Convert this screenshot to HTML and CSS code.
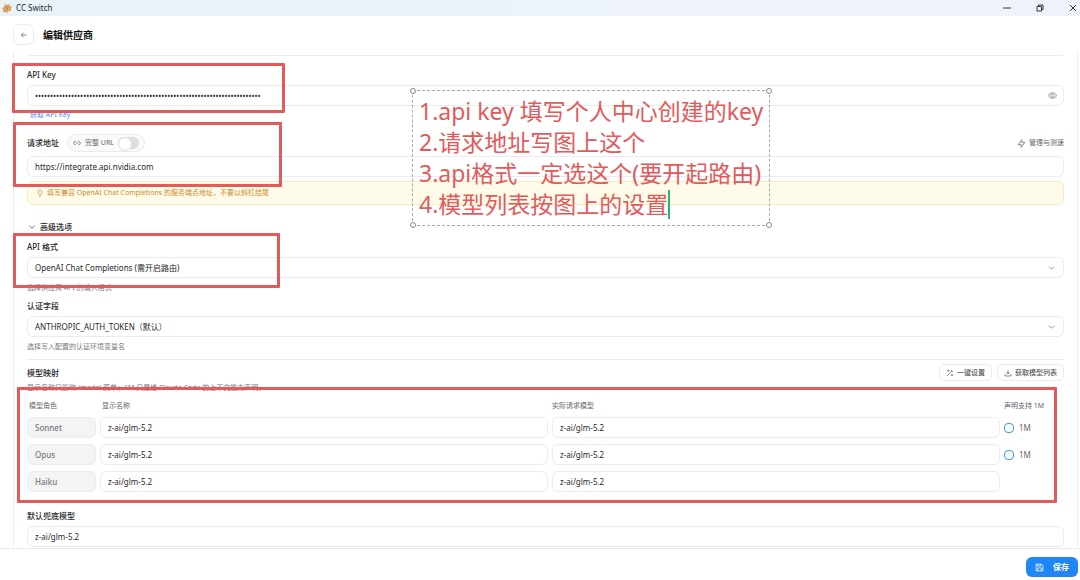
FILE: index.html
```html
<!DOCTYPE html>
<html lang="zh-CN">
<head>
  <meta charset="UTF-8" />
  <title>CC Switch</title>
  <link rel="stylesheet" href="styles.css">
</head>
<body>
  <div class="titlebar">
    <svg class="app-logo" viewBox="0 0 10 10">
      <path d="M3 1l2 1 2-1 1 2 2 1-1 2 0 2-2 0-2 2-2-1-2 0 0-2-1-2 2-1z" fill="#e2a566"/>
      <path d="M3 4h4M5 3v4M3 7l3-1" stroke="#c98a50" stroke-width="1" fill="none"/>
    </svg>
    <span>CC Switch</span>
    <div class="window-buttons">
      <button aria-label="Minimize"><svg viewBox="0 0 8 8"><path d="M0 4h8"/></svg></button>
      <button aria-label="Restore"><svg viewBox="0 0 8 8"><path d="M1 2.5h4.5V7H1zM2.5 2.500V1H7v4.500H5.500"/></svg></button>
      <button aria-label="Close"><svg viewBox="0 0 8 8"><path d="M1 1l6 6M7 1L1 7"/></svg></button>
    </div>
  </div>

  <header>
    <button class="back" aria-label="返回"><svg viewBox="0 0 24 24"><path d="M20 12H4M11 5l-7 7 7 7"/></svg></button>
    <h1>编辑供应商</h1>
  </header>

  <main>
    <form class="card" id="provider">
      <div class="field-end"></div>

      <label class="key-label" for="key">API Key</label>
      <div class="control">
        <input type="password" id="key" value="nvapi-000000000000000000000000000000000000000000000000000000000000000000000">
        <button type="button" class="eye" aria-label="显示"><svg viewBox="0 0 24 24"><path d="M2 12c1-5 4-7 10-7s9 2 10 7c-1 5-4 7-10 7s-9-2-10-7z"/><circle cx="12" cy="12" r="4"/></svg></button>
      </div>
      <a class="key-link" href="#">获取 API Key</a>

      <div class="url-row">
        <label for="url">请求地址</label>
        <label class="pill">
          <svg viewBox="0 0 24 24"><path d="M9 17H7A5 5 0 0 1 7 7h2M15 7h2a5 5 0 0 1 0 10h-2M8 12h8"/></svg>
          完整 URL
          <input type="checkbox" class="switch">
        </label>
        <button type="button" class="manage">
          <svg viewBox="0 0 24 24"><path d="M13 2v7h8L11 22v-7H3z"/></svg>
          管理与测速
        </button>
      </div>
      <input type="text" id="url" value="https://integrate.api.nvidia.com">
      <p class="notice">
        <svg viewBox="0 0 24 24"><path d="M9 17c0-4-3-4-3-8a6 6 0 0 1 12 0c0 4-3 4-3 8zM9 22h6"/></svg>
        填写兼容 OpenAI Chat Completions 的服务端点地址，不要以斜杠结尾
      </p>

      <button type="button" class="advanced">
        <svg viewBox="0 0 24 24"><path d="M4 8l8 8 8-8"/></svg>
        高级选项
      </button>

      <label for="format">API 格式</label>
      <select id="format"><option>OpenAI Chat Completions (需开启路由)</option></select>
      <p class="help">选择供应商 API 的输入格式</p>

      <label for="auth">认证字段</label>
      <select id="auth"><option>ANTHROPIC_AUTH_TOKEN（默认）</option></select>
      <p class="help">选择写入配置的认证环境变量名</p>

      <div class="mapping-head">
        <h2>模型映射</h2>
        <button type="button">
          <svg viewBox="0 0 24 24"><path d="M3 21L18 6M15 3l6 6M4 5h6M7 2v6M15 18h6M18 15v6"/></svg>
          一键设置
        </button>
        <button type="button">
          <svg viewBox="0 0 24 24"><path d="M12 3v12M7 10l5 5 5-5M3 15v6h18v-6"/></svg>
          获取模型列表
        </button>
      </div>
      <p class="help">显示名称只影响 /model 菜单；1M 只是给 Claude Code 的上下文能力声明。</p>

      <table>
        <thead>
          <tr>
            <th class="role">模型角色</th>
            <th>显示名称</th>
            <th class="request">实际请求模型</th>
            <th class="support">声明支持 1M</th>
          </tr>
        </thead>
        <tbody>
          <tr>
            <td><div class="role-name">Sonnet</div></td>
            <td><input type="text" aria-label="Sonnet 显示名称" value="z-ai/glm-5.2"></td>
            <td><input type="text" aria-label="Sonnet 实际请求模型" value="z-ai/glm-5.2"></td>
            <td><label class="million"><input type="checkbox"> 1M</label></td>
          </tr>
          <tr>
            <td><div class="role-name">Opus</div></td>
            <td><input type="text" aria-label="Opus 显示名称" value="z-ai/glm-5.2"></td>
            <td><input type="text" aria-label="Opus 实际请求模型" value="z-ai/glm-5.2"></td>
            <td><label class="million"><input type="checkbox"> 1M</label></td>
          </tr>
          <tr>
            <td><div class="role-name">Haiku</div></td>
            <td><input type="text" aria-label="Haiku 显示名称" value="z-ai/glm-5.2"></td>
            <td><input type="text" aria-label="Haiku 实际请求模型" value="z-ai/glm-5.2"></td>
            <td></td>
          </tr>
        </tbody>
      </table>

      <label for="fallback">默认兜底模型</label>
      <input type="text" id="fallback" value="z-ai/glm-5.2">
    </form>
  </main>

  <footer>
    <button class="save" form="provider">
      <svg viewBox="0 0 24 24"><path d="M3 3h14l4 4v14H3zM7 3v5h8V3M7 21v-8h10v8"/></svg>
      保存
    </button>
  </footer>

  <!-- markup drawn over the window -->
  <div class="mark mark-key"></div>
  <div class="mark mark-url"></div>
  <div class="mark mark-format"></div>
  <div class="mark mark-models"></div>
  <div class="textbox">
    <i class="handle tl"></i><i class="handle tr"></i><i class="handle bl"></i><i class="handle br"></i>
    <p>1.api key 填写个人中心创建的key</p>
    <p>2.请求地址写图上这个</p>
    <p>3.api格式一定选这个(要开起路由)</p>
    <p class="typing">4.模型列表按图上的设置</p>
  </div>
</body>
</html>
```

FILE: styles.css
```css
* {
  box-sizing: border-box;
}
body {
  margin: 0;
  height: 100vh;
  display: flex;
  flex-direction: column;
  position: relative;
  overflow: hidden;
  background: #fff;
  color: #27272a;
  font-family: "Noto Sans", "Noto Sans CJK SC", sans-serif;
  font-size: 8px;
  line-height: 12px;
}
button, input, select {
  font: inherit;
  color: inherit;
}
button {
  display: flex;
  align-items: center;
  padding: 0;
  border: none;
  background: none;
}
p, h1, h2 {
  margin: 0;
}
svg {
  width: 8px;
  height: 8px;
  flex: none;
  fill: none;
  stroke: currentColor;
  stroke-width: 2;
}

.titlebar {
  display: flex;
  align-items: center;
  gap: 4px;
  height: 16px;
  padding: 0 3px 0 2px;
  background: linear-gradient(90deg, #e9f3f7, #eff3fa);
}
.titlebar .app-logo {
  width: 10px;
  height: 10px;
  stroke: none;
}
.window-buttons {
  display: flex;
  gap: 25px;
  margin-left: auto;
  color: #333;
}
.window-buttons svg {
  stroke-width: 1;
}

header {
  display: flex;
  align-items: center;
  gap: 9px;
  height: 37px;
  padding-left: 13px;
}
.back {
  width: 21px;
  height: 21px;
  justify-content: center;
  border: 1px solid #ececee;
  border-radius: 6px;
  color: #555;
}
h1 {
  font-size: 10px;
  line-height: 16px;
  font-weight: 700;
  color: #111;
}

main {
  flex: 1;
  min-height: 0;
  overflow: hidden;
  padding: 0 2px 0 13px;
}
.card {
  display: flex;
  flex-direction: column;
  padding: 0 13px;
  border: 1px solid #ececee;
  border-width: 0 1px;
}
.field-end {
  height: 3px;
  margin-bottom: 13px;
  border-bottom: 1px solid #ececee;
  border-radius: 0 0 6px 6px;
}
label, h2 {
  font-size: 8px;
  font-weight: 500;
}
input[type=text], input[type=password], select {
  display: block;
  width: 100%;
  height: 21px;
  padding: 0 7px;
  border: 1px solid #ececee;
  border-radius: 6px;
  background: #fff;
}
.card > label {
  margin-bottom: 4px;
}
.control {
  position: relative;
}
.eye {
  position: absolute;
  right: 7px;
  top: 6px;
  color: #777;
}
.eye svg, .manage svg {
  width: 9px;
  height: 9px;
}
.key-link {
  margin: 3px 0 0 3px;
  font-size: 7px;
  color: #5b8def;
  text-decoration: none;
}
.url-row {
  display: flex;
  align-items: center;
  gap: 8px;
  height: 18px;
  margin: 13px 0 4px;
}
.pill {
  display: flex;
  align-items: center;
  gap: 4px;
  height: 18px;
  padding: 0 5px;
  border: 1px solid #ececee;
  border-radius: 9px;
  background: #fafafa;
  color: #666;
  font-size: 7px;
  font-weight: 400;
}
.switch {
  appearance: none;
  display: flex;
  width: 21px;
  height: 12px;
  margin: 0;
  border-radius: 6px;
  background: #dedee0;
}
.switch::before {
  content: "";
  width: 12px;
  height: 12px;
  border: 1px solid #dedee0;
  border-radius: 50%;
  background: #fff;
}
.manage {
  gap: 3px;
  margin-left: auto;
  font-size: 7px;
  color: #666;
}
.notice {
  display: flex;
  align-items: center;
  gap: 3px;
  height: 24px;
  margin-top: 4px;
  padding: 0 8px;
  border: 1px solid #f8edc0;
  border-radius: 6px;
  background: #fffbe9;
  font-size: 7px;
  color: #d08a2e;
}
.advanced {
  gap: 4px;
  margin: 16px 0 8px 1px;
  font-weight: 500;
}
.help {
  margin: 4px 0 6px;
  font-size: 7px;
  color: #77777c;
}

.mapping-head {
  display: flex;
  align-items: center;
  gap: 5px;
  padding-top: 4px;
  border-top: 1px solid #ececee;
}
.mapping-head h2 {
  margin-right: auto;
}
.mapping-head button {
  gap: 3px;
  height: 17px;
  padding: 0 6px;
  border: 1px solid #ececee;
  border-radius: 5px;
  font-size: 7px;
  font-weight: 500;
  color: #555;
}
.mapping-head + .help {
  margin: 1px 0 6px;
}
table {
  width: 100%;
  table-layout: fixed;
  border-collapse: collapse;
  margin-bottom: 12px;
}
th {
  padding: 0 2px 5px;
  text-align: left;
  font-size: 7px;
  font-weight: 400;
  color: #66666b;
  white-space: nowrap;
}
.role {
  width: 73px;
}
.request {
  padding-left: 0;
}
.support {
  width: 60px;
  padding-left: 0;
}
td {
  height: 27px;
  padding: 0 4px 6px 0;
  vertical-align: top;
}
td:last-child {
  padding-right: 0;
}
.role-name {
  height: 21px;
  padding: 4px 7px;
  border: 1px solid #ececee;
  border-radius: 6px;
  background: #f4f4f5;
  font-weight: 500;
  color: #77777c;
}
.million {
  display: flex;
  align-items: center;
  gap: 5px;
  height: 21px;
  font-weight: 400;
  color: #66666b;
}
.million input {
  appearance: none;
  width: 10px;
  height: 10px;
  margin: 0;
  border: 1px solid #4a9bd4;
  border-radius: 4px;
  background: #f3faff;
}

select {
  appearance: none;
  background: #fff url("data:image/svg+xml,%3Csvg xmlns='http://www.w3.org/2000/svg' viewBox='0 0 8 8'%3E%3Cpath d='M1 3l3 3 3-3' fill='none' stroke='%23888'/%3E%3C/svg%3E") no-repeat right 8px center / 7px 7px;
}

footer {
  display: flex;
  justify-content: flex-end;
  align-items: center;
  height: 32px;
  padding: 5px 2px 0 0;
  border-top: 1px solid #ececee;
  background: #fff;
}
.save {
  gap: 9px;
  height: 20px;
  padding: 0 9px;
  border-radius: 6px;
  background: #1f86f5;
  color: #fff;
  font-weight: 700;
}
.save svg {
  width: 9px;
  height: 9px;
}

.mark {
  position: absolute;
  border: 3px solid #e25a5a;
  border-radius: 1px;
}
.mark-key {
  left: 12px;
  top: 63px;
  width: 273px;
  height: 50px;
}
.mark-url {
  left: 13px;
  top: 122px;
  width: 269px;
  height: 65px;
}
.mark-format {
  left: 13px;
  top: 233px;
  width: 267px;
  height: 55px;
}
.mark-models {
  left: 17px;
  right: 23px;
  top: 387px;
  height: 116px;
}
.textbox {
  position: absolute;
  left: 412px;
  top: 90px;
  padding: 5px 6px;
  border: 1px dashed #aaa;
  font-size: 23px;
  line-height: 31px;
  color: #e25a5a;
  white-space: nowrap;
}
.typing {
  display: flex;
  align-items: center;
  height: 31px;
}
.typing::after {
  content: "";
  width: 2px;
  height: 29px;
  background: #2fb36b;
}
.handle {
  position: absolute;
  width: 6px;
  height: 6px;
  border: 1px solid #888;
  border-radius: 50%;
  background: #fff;
}
.tl { left: -3px; top: -3px; }
.tr { right: -3px; top: -3px; }
.bl { left: -3px; bottom: -3px; }
.br { right: -3px; bottom: -3px; }
```
